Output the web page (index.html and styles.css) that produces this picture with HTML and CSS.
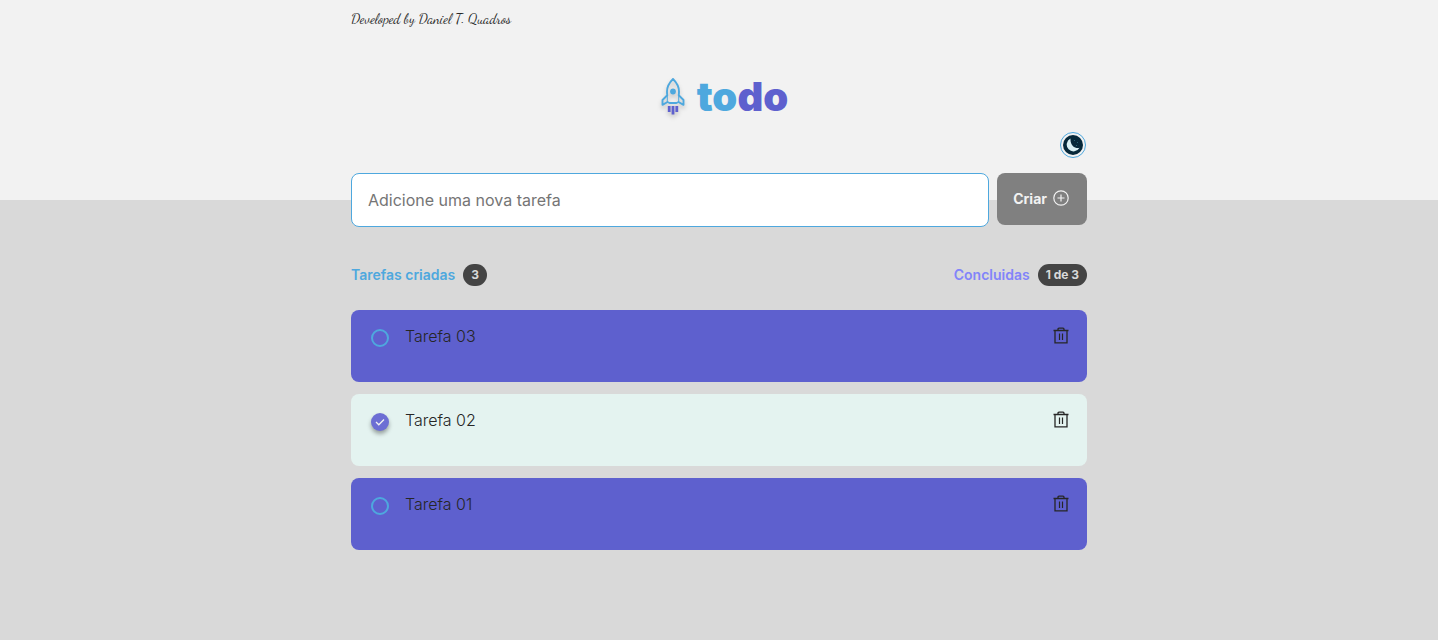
FILE: index.html
```html
<!DOCTYPE html>
<html lang="pt-BR">
<head>
<meta charset="utf-8">
<meta name="viewport" content="width=device-width, initial-scale=1">
<title>todo</title>
<link rel="stylesheet" href="styles.css">
</head>
<body>
<svg class="sprite" aria-hidden="true">
  <symbol id="trash" viewBox="0 0 16 18">
    <path d="M.5 3.500h15M2 3.500v12.300h12V3.500M5 3.500V2.300Q5 1.200 6 1.200h4q1 0 1 1.100v1.200" fill="none" stroke="currentColor" stroke-width="1.300"/>
    <path d="M6.500 6.500v6.500M9.500 6.500v6.500" stroke="currentColor" stroke-width="1.200"/>
  </symbol>
</svg>
<header class="header">
  <div class="container">
    <p class="credit">Developed by Daniel T. Quadros</p>
    <h1 class="logo">
      <svg class="rocket" viewBox="0 0 24 38" aria-hidden="true">
        <g fill="none" stroke="#4ea8de" stroke-width="1.900" stroke-linejoin="round">
          <path d="M12 1C8.500 4.500 6 9 6 13.500c0 1.200 0 2.600.3 3.800L1.500 22v4.800l5-2.800 2 1h7l2-1 5 2.800V22l-4.800-4.700c.3-1.200.3-2.600.3-3.800C18 9 15.500 4.500 12 1z"/>
          <path d="M6.300 17.300V24M17.700 17.300V24" stroke-width="1"/>
        </g>
        <circle cx="12" cy="13.500" r="2.900" fill="#4ea8de"/>
        <path d="M6.800 28h2.800v6H6.800zM10.600 28h2.800v8.500h-2.800zM14.400 28h2.800v6h-2.800z" fill="#5e60ce"/>
      </svg>
      <span><span class="logo-first">to</span><span class="logo-second">do</span></span>
    </h1>
    <div class="theme">
      <button class="theme-button" type="button" aria-label="Alternar tema">
        <svg viewBox="0 0 20 20" aria-hidden="true">
          <circle cx="10" cy="10" r="10" fill="#06283a"/>
          <path d="M7.500 3.500A6.800 6.800 0 1 0 16.500 12.800C12.500 14 7 10.500 7.500 3.500z" fill="#d9f0f4"/>
          <path d="M11 5h1v1h-1zM14 7h1v1h-1zM13 10h1v1h-1z" fill="#286070"/>
        </svg>
      </button>
    </div>
  </div>
</header>
<main class="container">
  <form class="new-task">
    <input class="task-input" type="text" placeholder="Adicione uma nova tarefa" aria-label="Nova tarefa">
    <button class="create" type="button">Criar
      <svg viewBox="0 0 16 16" aria-hidden="true"><g fill="none" stroke="currentColor" stroke-width="1.200"><circle cx="8" cy="8" r="7.200"/><path d="M8 4.500v7M4.500 8h7"/></g></svg>
    </button>
  </form>
  <section>
    <div class="summary">
      <p class="created">Tarefas criadas <span class="badge">3</span></p>
      <p class="done">Concluidas <span class="badge">1 de 3</span></p>
    </div>
    <ul class="tasks">
      <li class="task">
        <input class="check" type="checkbox" id="t3">
        <label class="task-name" for="t3">Tarefa 03</label>
        <button class="remove" type="button" aria-label="Remover Tarefa 03"><svg><use href="#trash"/></svg></button>
      </li>
      <li class="task task-done">
        <span class="check-wrap"><input class="check" type="checkbox" id="t2" checked><svg class="tick" viewBox="0 0 18 18" aria-hidden="true"><path d="m5 9 2.800 2.800L13 6.500" fill="none" stroke="#f2f2f2" stroke-width="1.300"/></svg></span>
        <label class="task-name" for="t2">Tarefa 02</label>
        <button class="remove" type="button" aria-label="Remover Tarefa 02"><svg><use href="#trash"/></svg></button>
      </li>
      <li class="task">
        <input class="check" type="checkbox" id="t1">
        <label class="task-name" for="t1">Tarefa 01</label>
        <button class="remove" type="button" aria-label="Remover Tarefa 01"><svg><use href="#trash"/></svg></button>
      </li>
    </ul>
  </section>
</main>
</body>
</html>
```
FILE: styles.css
```css
* {
  box-sizing: border-box;
  margin: 0;
  padding: 0;
}

body {
  background: #d9d9d9;
  color: #262626;
  font-family: Inter, "Liberation Sans", sans-serif;
  font-size: 16px;
}

button,
input {
  font: inherit;
}

button {
  border: 0;
  background: none;
  cursor: pointer;
}

svg {
  display: block;
}

.sprite {
  position: absolute;
  width: 0;
  height: 0;
}

.container {
  width: 100%;
  max-width: 736px;
  margin: 0 auto;
}

.header {
  padding: 8px 0 42px;
  background: #f2f2f2;
}

.credit {
  color: #262626;
  font-family: "Dancing Script", "Liberation Serif", cursive;
  font-size: 14px;
  line-height: 22px;
}

.logo {
  display: flex;
  align-items: center;
  justify-content: center;
  gap: 12px;
  margin-top: 43px;
  padding-left: 11px;
  font-size: 40px;
  font-weight: 900;
  line-height: 48px;
}

.rocket {
  width: 24px;
  height: 38px;
  filter: drop-shadow(0 3px 2px rgba(0, 0, 0, 0.2));
}

.logo-first {
  color: #4ea8de;
}

.logo-second {
  color: #5e60ce;
}

.theme {
  display: flex;
  justify-content: flex-end;
  margin-top: 11px;
  padding-right: 1px;
}

.theme-button {
  width: 26px;
  height: 26px;
  padding: 2px;
  border: 1px solid #4ea8de;
  border-radius: 50%;
}

.new-task {
  display: flex;
  align-items: flex-start;
  gap: 8px;
  margin-top: -27px;
}

.task-input {
  flex: 1;
  min-width: 0;
  height: 54px;
  padding: 0 16px;
  border: 1px solid #4ea8de;
  border-radius: 8px;
  background: #ffffff;
  color: #262626;
}

.task-input::placeholder {
  color: #757575;
}

.create {
  display: flex;
  align-items: center;
  gap: 6px;
  height: 52px;
  padding: 0 18px 2px 16px;
  border-radius: 8px;
  background: #808080;
  color: #f2f2f2;
  font-size: 14px;
  font-weight: 700;
}

.create svg {
  width: 16px;
  height: 16px;
}

.summary {
  display: flex;
  justify-content: space-between;
  margin: 37px 0 24px;
  font-size: 14px;
  font-weight: 600;
  line-height: 22px;
}

.summary p {
  display: flex;
  align-items: center;
  gap: 8px;
}

.created {
  color: #4ea8de;
}

.done {
  color: #8284fa;
}

.badge {
  padding: 0 8px;
  border-radius: 11px;
  background: #444444;
  color: #d9d9d9;
  font-size: 12px;
  font-weight: 700;
}

.tasks {
  display: grid;
  gap: 12px;
  list-style: none;
}

.task {
  display: flex;
  align-items: flex-start;
  min-height: 72px;
  padding: 16px 18px 16px 20px;
  border-radius: 8px;
  background: #5e60ce;
}

.task-done {
  background: #e4f3f0;
}

.check {
  display: block;
  flex: none;
  width: 18px;
  height: 18px;
  margin-top: 3px;
  border: 2px solid #4ea8de;
  border-radius: 50%;
  appearance: none;
}

.check:checked {
  border: 0;
  background: #6c6ed4;
  box-shadow: 0 3px 4px rgba(0, 0, 0, 0.35);
}

.check-wrap {
  position: relative;
}

.tick {
  position: absolute;
  right: 0;
  bottom: 0;
  width: 18px;
  height: 18px;
  pointer-events: none;
}

.task-name {
  flex: 1;
  margin-left: 16px;
  font-weight: 300;
  line-height: 20px;
}

.remove {
  padding-top: 1px;
  color: #262626;
}

.remove svg {
  width: 16px;
  height: 18px;
}
```
